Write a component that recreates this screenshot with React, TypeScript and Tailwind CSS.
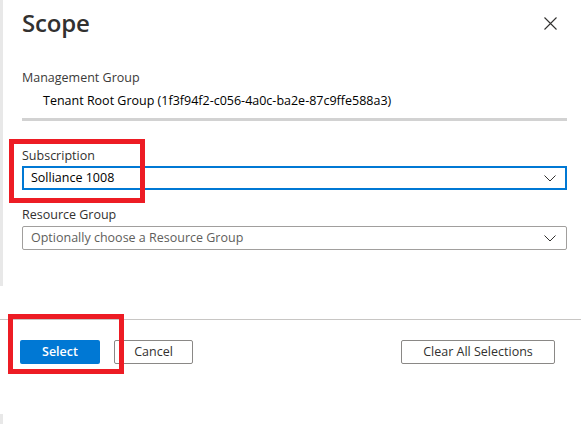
import React from "react";

const Chevron = () => (
  <svg width="12" height="7" viewBox="0 0 12 7" fill="none">
    <path d="M0.5 0.5 L6 6 L11.5 0.5" stroke="#323130" strokeWidth="1" />
  </svg>
);

const CloseIcon = () => (
  <svg width="13" height="13" viewBox="0 0 13 13" fill="none">
    <path d="M0.5 0.5 L12.5 12.5 M12.5 0.5 L0.5 12.5" stroke="#323130" strokeWidth="1.1" />
  </svg>
);

export default function App() {
  return (
    <div
      className="relative w-[581px] h-[424px] bg-white overflow-hidden text-[12.5px] text-[#323130]"
      style={{ fontFamily: '"Open Sans", "Noto Sans", sans-serif' }}
    >
      {/* main form area */}
      <div className="h-[286px] border-l-[3px] border-[#e8e8e8] pl-[19px] pr-[14px]">
        <div className="flex h-[44px] items-center justify-between pt-[1px]">
          <h1 className="text-[24px] font-semibold leading-[32px] tracking-[-0.2px] text-[#323130]">Scope</h1>
          <div className="mr-[10px] mt-[1px] flex items-center">
            <CloseIcon />
          </div>
        </div>
        <div className="mt-[23px] h-[20px] pt-px leading-[20px] text-[#3b3a39]">Management Group</div>
        <div className="mt-[3px] h-[20px] pl-[21px] pt-px leading-[20px] text-black">
          Tenant Root Group (1f3f94f2-c056-4a0c-ba2e-87c9ffe588a3)
        </div>
        <div className="mt-[8px] h-[3px] bg-[#d2d2d2]" />
        <div className="mt-[24px] h-[20px] pt-px leading-[20px]">Subscription</div>
        <div className="mt-[1px] flex h-[24px] items-center justify-between border-2 border-[#0078d4] pl-[7px] pr-[9px] text-black">
          <span className="pt-px">Solliance 1008</span>
          <Chevron />
        </div>
        <div className="mt-[14px] h-[20px] pt-px leading-[20px]">Resource Group</div>
        <div className="mt-[2px] flex h-[24px] items-center justify-between rounded-[2px] border border-[#a19f9d] pl-[8px] pr-[10px] text-[#605e5c]">
          <span className="pt-px">Optionally choose a Resource Group</span>
          <Chevron />
        </div>
      </div>

      {/* footer */}
      <div className="h-[95px]">
        <div className="mt-[33px] h-px bg-[#c8c6c4]" />
        <div className="mt-[20px] flex items-center pl-[20px] pr-[26px]">
          <button className="h-[24px] w-[80px] rounded-[2px] bg-[#0078d4] text-[12.5px] font-semibold text-white">
            Select
          </button>
          <button className="ml-[14px] h-[24px] w-[79px] rounded-[2px] border border-[#8a8886] bg-white text-[12.5px] text-[#323130]">
            Cancel
          </button>
          <div className="flex-1" />
          <button className="h-[24px] w-[154px] rounded-[2px] border border-[#8a8886] bg-white text-[12.5px] text-[#323130]">
            Clear All Selections
          </button>
        </div>
      </div>
      <div className="h-[43px] border-l-[3px] border-[#e8e8e8]" />

      {/* annotation boxes */}
      <div className="pointer-events-none absolute left-[9px] top-[139px] h-[64px] w-[136px] border-[5px] border-[#ed1c24]" />
      <div className="pointer-events-none absolute left-[8px] top-[314px] h-[60px] w-[116px] border-[5px] border-[#ed1c24]" />
    </div>
  );
}
